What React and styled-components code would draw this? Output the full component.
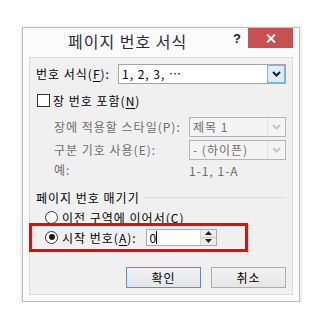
import React from "react";
import styled, { createGlobalStyle } from "styled-components";

const Global = createGlobalStyle`
  html, body { margin: 0; padding: 0; background: #fff; }
  body { font-family: "Noto Sans CJK KR", "Noto Sans", sans-serif; }
`;

const Page = styled.div`
  padding: 27px 0 0 22px;
`;

const Dialog = styled.div`
  position: relative;
  box-sizing: border-box;
  width: 278px;
  height: 275px;
  background: #fbfbfb;
  border: 1px solid #bfbfbf;
  box-shadow: 0 1px 4px rgba(0,0,0,0.18);
  padding: 0 6px 6px 6px;
  display: flex;
  flex-direction: column;
`;

const TitleBar = styled.div`
  height: 29px;
  display: flex;
  align-items: flex-start;
`;

const Title = styled.div`
  margin: 3px 0 0 39px;
  font-size: 16px;
  line-height: 20px;
  letter-spacing: 1px;
  color: #2b2b3a;
  flex: 1;
`;

const Help = styled.div`
  width: 8px;
  margin-top: 1px;
  font-family: "Liberation Sans", sans-serif;
  font-weight: bold;
  font-size: 13px;
  line-height: 20px;
  color: #222;
`;

const Close = styled.div`
  width: 45px;
  height: 20px;
  margin-left: 7px;
  background: #c75050;
  display: flex;
  align-items: center;
  justify-content: center;
`;

const Panel = styled.div`
  flex: 1;
  background: #f0f0f0;
  border: 1px solid #dadada;
  padding: 6px 6px 0 6px;
  display: flex;
  flex-direction: column;
  font-size: 12px;
  letter-spacing: 1px;
  color: #000;
`;

const Row = styled.div`
  display: flex;
  align-items: center;
  height: ${p => p.$h || 18}px;
  margin-top: ${p => p.$mt || 0}px;
  padding-left: ${p => p.$indent || 0}px;
  color: ${p => (p.$disabled ? "#6d6d6d" : "#000")};
  white-space: nowrap;
`;

const Label = styled.div`
  width: ${p => p.$w}px;
  flex: none;
  line-height: 16px;
`;

const U = styled.span`
  text-decoration: underline;
  text-underline-offset: 2px;
`;

const Combo = styled.div`
  box-sizing: border-box;
  flex: 1;
  height: 20px;
  display: flex;
  border: 1px solid ${p => (p.$disabled ? "#b4b4b4" : "#a5a5a5")};
  background: ${p => (p.$disabled ? "#f4f4f4" : "#fff")};
  color: ${p => (p.$disabled ? "#6d6d6d" : "#000")};
`;

const ComboText = styled.div`
  flex: 1;
  padding-left: 3px;
  line-height: 18px;
`;

const DropBtn = styled.div`
  box-sizing: border-box;
  width: 18px;
  height: 100%;
  display: flex;
  align-items: center;
  justify-content: center;
  background: ${p => (p.$disabled ? "#f4f4f4" : "#dcecfc")};
  border-left: 1px solid ${p => (p.$disabled ? "#e0e0e0" : "#7eb4ea")};
  outline: ${p => (p.$disabled ? "none" : "1px solid #7eb4ea")};
  outline-offset: -1px;
`;

const CheckBox = styled.div`
  box-sizing: border-box;
  width: 13px;
  height: 13px;
  border: 1px solid #333;
  background: #fff;
  margin: 0 3px 0 1px;
`;

const Radio = styled.div`
  box-sizing: border-box;
  width: 13px;
  height: 13px;
  border-radius: 50%;
  border: 1px solid #333;
  background: #fff;
  margin: 0 4px 0 9px;
  display: flex;
  align-items: center;
  justify-content: center;
  &::after {
    content: "";
    width: 6px;
    height: 6px;
    border-radius: 50%;
    background: ${p => (p.$checked ? "#1a1a1a" : "transparent")};
  }
`;

const GroupLine = styled.div`
  flex: 1;
  height: 1px;
  background: #dcdcdc;
  margin: 1px 0 0 4px;
`;

const SpinInput = styled.div`
  box-sizing: border-box;
  width: 71px;
  height: 17px;
  margin-left: 9px;
  border: 1px solid #acacac;
  background: #fff;
  display: flex;
`;

const SpinText = styled.div`
  flex: 1;
  padding-left: 3px;
  line-height: 15px;
  letter-spacing: 0;
  display: flex;
  align-items: center;
`;

const Caret = styled.span`
  display: inline-block;
  width: 1px;
  height: 13px;
  background: #000;
`;

const SpinButtons = styled.div`
  width: 15px;
  display: flex;
  flex-direction: column;
  border-left: 1px solid #d4d4d4;
`;

const SpinHalf = styled.div`
  flex: 1;
  display: flex;
  align-items: center;
  justify-content: center;
  background: #ececec;
  border-top: ${p => (p.$bottom ? "1px solid #c8c8c8" : "none")};
`;

const Buttons = styled.div`
  display: flex;
  justify-content: flex-end;
  gap: 10px;
  margin-top: 21px;
`;

const Button = styled.div`
  box-sizing: border-box;
  width: 75px;
  height: 21px;
  border: 1px solid ${p => (p.$focus ? "#3c96f0" : "#adadad")};
  background: linear-gradient(#f2f2f2, #e6e6e6);
  display: flex;
  align-items: center;
  justify-content: center;
  font-size: 12px;
  color: #000;
`;

const Highlight = styled.div`
  position: absolute;
  left: 6px;
  top: 195px;
  width: 219px;
  height: 29px;
  box-sizing: border-box;
  border: 3px solid #ff0000;
  pointer-events: none;
`;

const Chevron = ({ color }) => (
  <svg width="9" height="6" viewBox="0 0 9 6">
    <path d="M1 1 L4.5 4.5 L8 1" fill="none" stroke={color} strokeWidth="2" />
  </svg>
);

const Tri = ({ up }) => (
  <svg width="7" height="4" viewBox="0 0 7 4">
    <path d={up ? "M0 4 L3.5 0 L7 4 Z" : "M0 0 L3.5 4 L7 0 Z"} fill="#222" />
  </svg>
);

export default function App() {
  return (
    <>
      <Global />
      <Page>
        <Dialog>
          <TitleBar>
            <Title>페이지 번호 서식</Title>
            <Help>?</Help>
            <Close>
              <svg width="10" height="9" viewBox="0 0 10 9">
                <path d="M1 0.5 L9 8.5 M9 0.5 L1 8.5" stroke="#fff" strokeWidth="2" />
              </svg>
            </Close>
          </TitleBar>
          <Panel>
            <Row $h={20}>
              <Label $w={82}>번호 서식(<U>F</U>):</Label>
              <Combo>
                <ComboText>1, 2, 3, …</ComboText>
                <DropBtn><Chevron color="#1a1a1a" /></DropBtn>
              </Combo>
            </Row>
            <Row $h={20} $mt={6}>
              <CheckBox />
              <span>장 번호 포함(<U>N</U>)</span>
            </Row>
            <Row $h={20} $mt={7} $indent={18} $disabled>
              <Label $w={135}>장에 적용할 스타일(P):</Label>
              <Combo $disabled>
                <ComboText>제목 1</ComboText>
                <DropBtn $disabled><Chevron color="#c4c4c4" /></DropBtn>
              </Combo>
            </Row>
            <Row $h={20} $mt={3} $indent={18} $disabled>
              <Label $w={135}>구분 기호 사용(E):</Label>
              <Combo $disabled>
                <ComboText>-  (하이픈)</ComboText>
                <DropBtn $disabled><Chevron color="#c4c4c4" /></DropBtn>
              </Combo>
            </Row>
            <Row $h={18} $mt={1} $indent={18} $disabled>
              <Label $w={135}>예:</Label>
              <span>1-1, 1-A</span>
            </Row>
            <Row $h={18} $mt={9}>
              <span>페이지 번호 매기기</span>
              <GroupLine />
            </Row>
            <Row $h={18} $mt={2}>
              <Radio />
              <span>이전 구역에 이어서(<U>C</U>)</span>
            </Row>
            <Row $h={18} $mt={2}>
              <Radio $checked />
              <span>시작 번호(<U>A</U>):</span>
              <SpinInput>
                <SpinText>0<Caret /></SpinText>
                <SpinButtons>
                  <SpinHalf><Tri up /></SpinHalf>
                  <SpinHalf $bottom><Tri /></SpinHalf>
                </SpinButtons>
              </SpinInput>
            </Row>
            <Buttons>
              <Button $focus>확인</Button>
              <Button>취소</Button>
            </Buttons>
          </Panel>
          <Highlight />
        </Dialog>
      </Page>
    </>
  );
}
